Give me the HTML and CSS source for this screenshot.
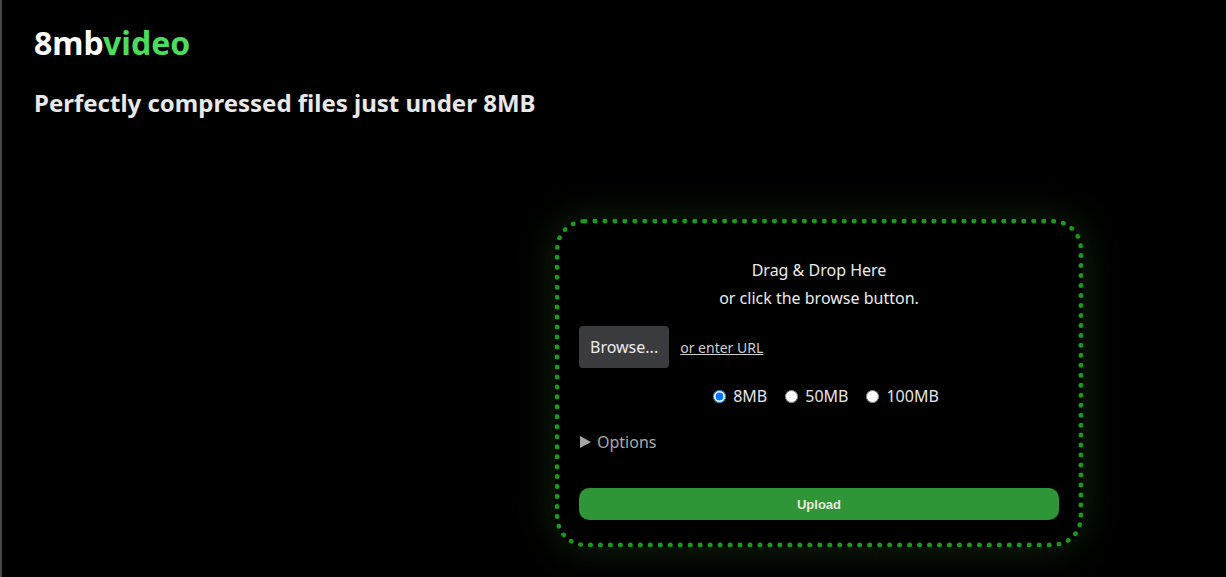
FILE: index.html
```html
<!DOCTYPE html>
<html lang="en">
<head>
  <meta charset="UTF-8">
  <title>8mb.video</title>
  <link rel="stylesheet" href="styles.css">
</head>
<body>

  <div class="page">
    <h1 class="logo">8mb<span class="green">video</span></h1>
    <h2 class="tagline">Perfectly compressed files just under 8MB</h2>

    <div class="stage">
      <form class="dropzone" onsubmit="return false">
        <p class="hint">Drag &amp; Drop Here<br>or click the browse button.</p>

        <div class="file-row">
          <button type="button" class="browse">Browse...</button>
          <a href="#" class="url-link">or enter URL</a>
        </div>

        <div class="sizes">
          <label><input type="radio" name="size" checked> 8MB</label>
          <label><input type="radio" name="size"> 50MB</label>
          <label><input type="radio" name="size"> 100MB</label>
        </div>

        <details class="options">
          <summary>Options</summary>
        </details>

        <button type="submit" class="upload">Upload</button>
      </form>
    </div>
  </div>

</body>
</html>
```

FILE: styles.css
```css
html, body {
  height: 100%;
}

body {
  margin: 0;
  background: #000;
  color: #e6e6e6;
  font-family: 'Noto Sans', 'Open Sans', sans-serif;
  border-left: 2px solid #43464b;
  overflow: hidden;
}

.page {
  padding: 0 32px;
}

.logo {
  margin: 21px 0 0;
  font-size: 32px;
  font-weight: 700;
  color: #fff;
}

.logo .green {
  color: #4cdb5a;
}

.tagline {
  margin: 22px 0 0;
  font-size: 24px;
  font-weight: 700;
  color: #e8e8e8;
}

.stage {
  display: flex;
  justify-content: flex-end;
  padding: 100px 111px 0 0;
}

.dropzone {
  width: 480px;
  padding: 20px 19px 22px;
  border: 5px dotted #1a9a1a;
  border-radius: 30px;
  background: #000;
  box-shadow: 0 0 40px rgba(40, 110, 30, 0.35);
}

.hint {
  margin: 12px 0 0;
  text-align: center;
  font-size: 16px;
  line-height: 28px;
  color: #ececec;
}

.file-row {
  display: flex;
  align-items: center;
  gap: 11px;
  margin-top: 14px;
}

.browse {
  height: 42px;
  padding: 0 11px;
  background: #3a3b3e;
  color: #ececec;
  border: none;
  border-radius: 4px;
  font-family: inherit;
  font-size: 16px;
}

.url-link {
  color: #cfcfcf;
  font-size: 14px;
}

.sizes {
  display: flex;
  justify-content: center;
  gap: 18px;
  margin-top: 17px;
  padding-left: 14px;
  font-size: 16px;
}

.sizes label {
  display: flex;
  align-items: center;
  gap: 4px;
}

.sizes input {
  margin: 0 3px 0 0;
  width: 13px;
  height: 13px;
}

.options {
  margin-top: 24px;
  font-size: 16px;
  color: #a9a9a9;
}

.options summary {
  display: flex;
  align-items: center;
  list-style: none;
  cursor: pointer;
}

.options summary::-webkit-details-marker {
  display: none;
}

/* closed disclosure triangle */
.options summary::before {
  content: "";
  width: 0;
  height: 0;
  margin: 0 6px 0 1px;
  border-top: 6px solid transparent;
  border-bottom: 6px solid transparent;
  border-left: 11px solid #a5a5a5;
}

.upload {
  display: block;
  width: 100%;
  height: 32px;
  margin-top: 35px;
  background: #2e9636;
  color: #ebe8dc;
  border: none;
  border-radius: 10px;
  font-family: 'Liberation Sans', Arial, sans-serif;
  font-weight: 700;
  font-size: 13px;
}
```
